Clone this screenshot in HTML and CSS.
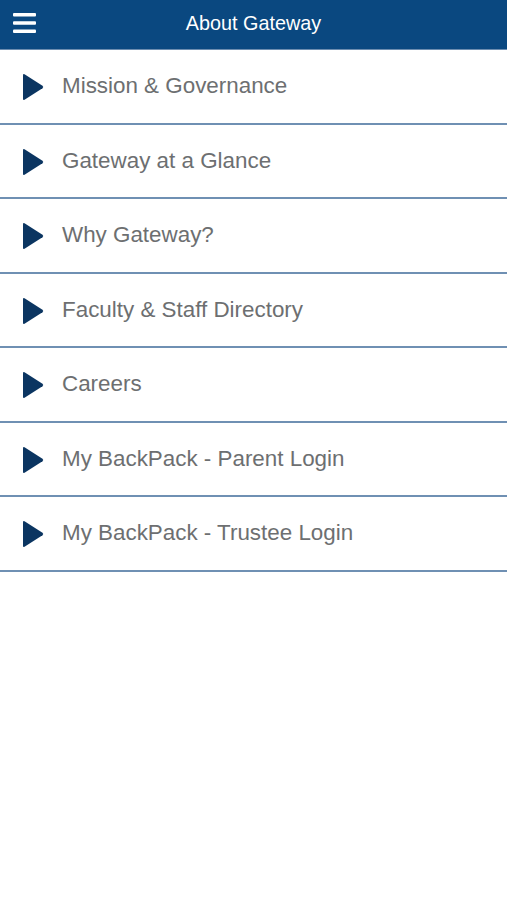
FILE: index.html
```html
<!DOCTYPE html>
<html>
<head>
<meta charset="utf-8">
<link rel="stylesheet" href="styles.css">
</head>
<body>
<header class="topbar">
  <svg class="menu" width="23" height="20" viewBox="0 0 23 20"><rect x="0" y="0" width="23" height="3.6" rx="1" fill="#fff"/><rect x="0" y="8.2" width="23" height="3.6" rx="1" fill="#fff"/><rect x="0" y="16.4" width="23" height="3.6" rx="1" fill="#fff"/></svg>
  <h1 class="title">About Gateway</h1>
</header>
<ul class="list">
  <li class="item"><svg class="arrow" width="22" height="28" viewBox="0 0 22 28"><path d="M2.5 1.2 Q1 0.4 1 2.2 V25.8 Q1 27.6 2.5 26.8 L20.5 15.2 Q22 14 20.5 12.8 Z" fill="#0b3561"/></svg><span>Mission &amp; Governance</span></li>
  <li class="item"><svg class="arrow" width="22" height="28" viewBox="0 0 22 28"><path d="M2.5 1.2 Q1 0.4 1 2.2 V25.8 Q1 27.6 2.5 26.8 L20.5 15.2 Q22 14 20.5 12.8 Z" fill="#0b3561"/></svg><span>Gateway at a Glance</span></li>
  <li class="item"><svg class="arrow" width="22" height="28" viewBox="0 0 22 28"><path d="M2.5 1.2 Q1 0.4 1 2.2 V25.8 Q1 27.6 2.5 26.8 L20.5 15.2 Q22 14 20.5 12.8 Z" fill="#0b3561"/></svg><span>Why Gateway?</span></li>
  <li class="item"><svg class="arrow" width="22" height="28" viewBox="0 0 22 28"><path d="M2.5 1.2 Q1 0.4 1 2.2 V25.8 Q1 27.6 2.5 26.8 L20.5 15.2 Q22 14 20.5 12.8 Z" fill="#0b3561"/></svg><span>Faculty &amp; Staff Directory</span></li>
  <li class="item"><svg class="arrow" width="22" height="28" viewBox="0 0 22 28"><path d="M2.5 1.2 Q1 0.4 1 2.2 V25.8 Q1 27.6 2.5 26.8 L20.5 15.2 Q22 14 20.5 12.8 Z" fill="#0b3561"/></svg><span>Careers</span></li>
  <li class="item"><svg class="arrow" width="22" height="28" viewBox="0 0 22 28"><path d="M2.5 1.2 Q1 0.4 1 2.2 V25.8 Q1 27.6 2.5 26.8 L20.5 15.2 Q22 14 20.5 12.8 Z" fill="#0b3561"/></svg><span>My BackPack - Parent Login</span></li>
  <li class="item"><svg class="arrow" width="22" height="28" viewBox="0 0 22 28"><path d="M2.5 1.2 Q1 0.4 1 2.2 V25.8 Q1 27.6 2.5 26.8 L20.5 15.2 Q22 14 20.5 12.8 Z" fill="#0b3561"/></svg><span>My BackPack - Trustee Login</span></li>
</ul>
</body>
</html>
```
FILE: styles.css
```css
* { box-sizing: border-box; }
html, body { margin: 0; padding: 0; background: #fff; }
body { font-family: "Liberation Sans", Arial, sans-serif; width: 507px; }
.topbar {
  height: 50px;
  background: #0a4880;
  display: flex;
  align-items: center;
  justify-content: center;
  position: relative;
  border-bottom: 1px solid #6c8db0;
}
.menu { position: absolute; left: 13px; top: 13px; }
.title {
  margin: 0;
  color: #fff;
  font-size: 19.8px;
  font-weight: normal;
  padding-bottom: 3px;
}
.list { list-style: none; margin: 0; padding: 0; }
.item {
  height: 74.5px;
  display: flex;
  align-items: center;
  padding-left: 22px;
  border-bottom: 2px solid #6f90b3;
  color: #6d6f71;
  font-size: 22.4px;
}
.arrow { flex: none; margin-right: 18px; margin-top: 2px; }
```
